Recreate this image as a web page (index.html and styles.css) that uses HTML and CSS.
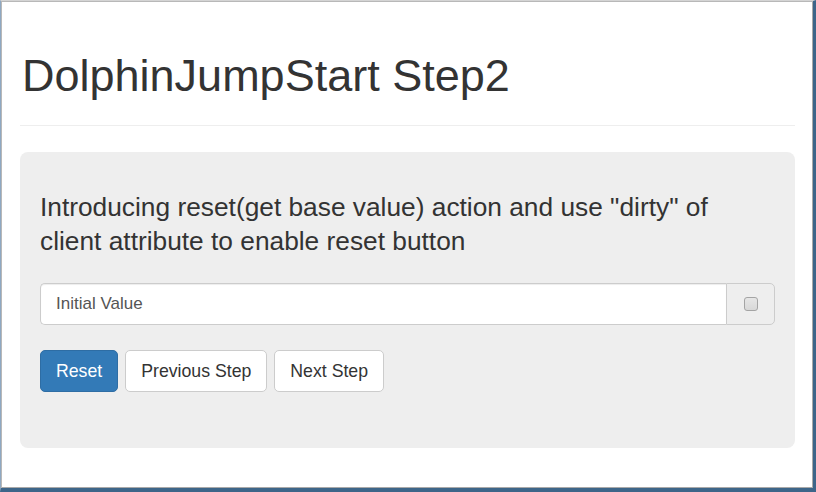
FILE: index.html
```html
<!DOCTYPE html>
<html>
<head>
<meta charset="utf-8">
<title>DolphinJumpStart Step2</title>
<link rel="stylesheet" href="styles.css">
</head>
<body>
<div class="frame">
  <div class="container">
    <div class="page-header">
      <h1>DolphinJumpStart Step2</h1>
    </div>
    <div class="jumbotron">
      <p class="lead">Introducing reset(get base value) action and use "dirty" of client attribute to enable reset button</p>
      <div class="input-group">
        <input class="form-control" type="text" value="Initial Value">
        <span class="addon"><span class="check"></span></span>
      </div>
      <div class="buttons">
        <button class="btn btn-primary">Reset</button>
        <button class="btn">Previous Step</button>
        <button class="btn">Next Step</button>
      </div>
    </div>
  </div>
</div>
</body>
</html>
```

FILE: styles.css
```css
* { box-sizing: border-box; }
html, body { margin: 0; padding: 0; }
body {
  font-family: "Liberation Sans", Arial, Helvetica, sans-serif;
  color: #333;
  background: #fff;
}
.frame {
  width: 816px;
  height: 492px;
  border-top: 1px solid #d4d4d4;
  border-left: 1px solid #8ea8c2;
  border-right: 3px solid #3d6589;
  border-bottom: 4px solid #3d6589;
  box-shadow: inset 1px 1px 0 #b8b8b8, inset -1px -1px 0 #a9a9a9;
  overflow: hidden;
}
.container {
  padding: 0 18px 0 19px;
}
.page-header {
  margin-top: 50px;
  padding-bottom: 24px;
  border-bottom: 1px solid #eee;
}
h1 {
  margin: 0;
  font-size: 45px;
  line-height: 50px;
  font-weight: 400;
  color: #333;
  padding-left: 2px;
}
.jumbotron {
  margin-top: 26px;
  background: #eee;
  border-radius: 8px;
  padding: 38px 20px 56px 20px;
}
.lead {
  margin: 0 0 25px 0;
  font-size: 26.3px;
  line-height: 34px;
  color: #333;
}
.input-group {
  display: flex;
  height: 42px;
}
.form-control {
  flex: 1;
  height: 42px;
  border: 1px solid #ccc;
  border-right: 0;
  border-radius: 5px 0 0 5px;
  padding: 0 15px;
  font-family: "Liberation Sans", Arial, sans-serif;
  font-size: 17px;
  color: #555;
  background: #fff;
  box-shadow: inset 0 1px 1px rgba(0,0,0,.075);
  outline: none;
}
.addon {
  width: 49px;
  height: 42px;
  border: 1px solid #ccc;
  border-radius: 0 5px 5px 0;
  background: #eee;
  display: flex;
  align-items: center;
  justify-content: center;
}
.check {
  width: 14px;
  height: 14px;
  border: 1px solid #a4a4a4;
  border-radius: 3px;
  background: linear-gradient(#e6e6e6, #d8d8d8);
}
.buttons {
  margin-top: 25px;
  display: flex;
  gap: 7px;
}
.btn {
  height: 42px;
  padding: 0 15px;
  font-family: "Liberation Sans", Arial, sans-serif;
  font-size: 17.7px;
  color: #333;
  background: #fff;
  border: 1px solid #ccc;
  border-radius: 5px;
}
.btn-primary {
  color: #fff;
  background: #337ab7;
  border-color: #2e6da4;
}
```
